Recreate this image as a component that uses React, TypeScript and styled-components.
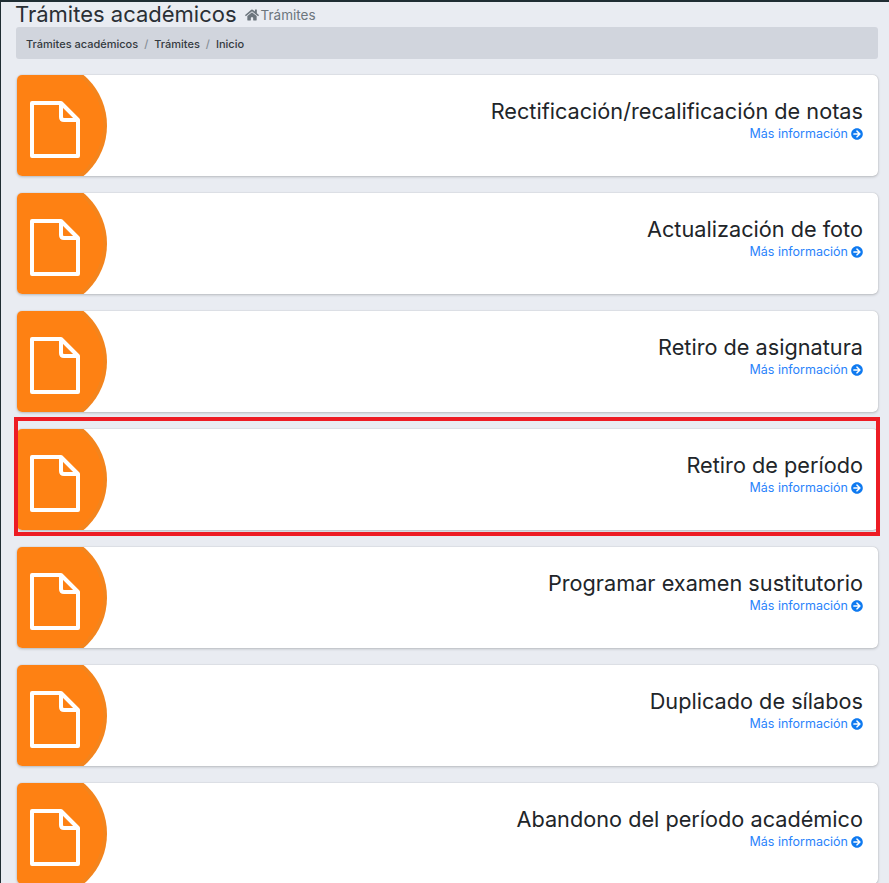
import React from "react";
import styled, { createGlobalStyle } from "styled-components";
import { FaHome, FaArrowCircleRight } from "react-icons/fa";

const Global = createGlobalStyle`
  html, body { margin: 0; padding: 0; height: 883px; overflow: hidden; background: #e9ecf2; }
  * { box-sizing: border-box; }
  body { font-family: Inter, "Noto Sans", "Liberation Sans", sans-serif; color: #212529; }
`;

const Page = styled.div`
  height: 883px;
  overflow: hidden;
  border-top: 2px solid #1f2d33;
  border-left: 1px solid #1f2d33;
  padding: 0 11px 0 15px;
`;

const Header = styled.div`
  display: flex;
  align-items: baseline;
  height: 25px;
  gap: 8px;
  line-height: 22px;
  padding-top: 1px;
`;

const Title = styled.h1`
  margin: 0 0 0 -1px;
  font-size: 22px;
  font-weight: 400;
  color: #2a2f35;
`;

const Sub = styled.span`
  display: inline-flex;
  align-items: center;
  gap: 2px;
  font-size: 13.5px;
  color: #6c757d;
`;

const Crumbs = styled.nav`
  display: flex;
  align-items: center;
  height: 32px;
  padding: 1px 10px 0;
  background: #d1d5dd;
  border-radius: 3px;
  font-size: 11px;
  font-weight: 500;
  color: #343a40;
  margin-bottom: 16px;
`;

const Sep = styled.span`
  color: #868e96;
  margin: 0 6px;
`;

const List = styled.div`
  display: flex;
  flex-direction: column;
  gap: 17px;
  padding-left: 1px;
`;

const Wrap = styled.div`
  position: relative;
`;

const Card = styled.div`
  display: flex;
  height: 101px;
  background: #fff;
  border-radius: 5px;
  overflow: hidden;
  box-shadow: 0 0 1px rgba(0, 0, 0, 0.25), 0 1px 3px rgba(0, 0, 0, 0.2);
`;

const Blob = styled.div`
  flex: 0 0 90px;
  display: flex;
  align-items: center;
  padding: 8px 0 0 13px;
  background: radial-gradient(circle at 24px 50%, #fe8113 0 62px, #f4841c 62px);
  clip-path: circle(66px at 24px 50%);
`;

const Body = styled.div`
  flex: 1;
  display: flex;
  flex-direction: column;
  align-items: flex-end;
  padding: 23px 15px 0 0;
`;

const CardTitle = styled.div`
  font-size: 21.7px;
  line-height: 27px;
  color: #212529;
`;

const More = styled.a`
  display: inline-flex;
  align-items: center;
  gap: 3px;
  font-size: 12.5px;
  line-height: 18px;
  color: #2a83fb;
  svg { color: #0f7af0; }
`;

const Highlight = styled.div`
  position: absolute;
  left: -3px;
  right: -2px;
  top: -12px;
  bottom: -6px;
  border: 4px solid #ed1c24;
  pointer-events: none;
`;

const FileIcon = () => (
  <svg width="50" height="57" viewBox="0 0 50 57" fill="none" stroke="#fff" strokeWidth="4" strokeLinejoin="round">
    <path d="M2 2H31L48 19V55H2Z" />
    <path d="M31 2V16Q31 19 34 19H48" />
  </svg>
);

const items = [
  "Rectificación/recalificación de notas",
  "Actualización de foto",
  "Retiro de asignatura",
  "Retiro de período",
  "Programar examen sustitutorio",
  "Duplicado de sílabos",
  "Abandono del período académico",
];

export default function App() {
  return (
    <>
      <Global />
      <Page>
        <Header>
          <Title>Trámites académicos</Title>
          <Sub><FaHome size={14} />Trámites</Sub>
        </Header>
        <Crumbs>
          Trámites académicos<Sep>/</Sep>Trámites<Sep>/</Sep>Inicio
        </Crumbs>
        <List>
          {items.map((t) => (
            <Wrap key={t}>
              <Card>
                <Blob><FileIcon /></Blob>
                <Body>
                  <CardTitle>{t}</CardTitle>
                  <More>Más información <FaArrowCircleRight size={12} /></More>
                </Body>
              </Card>
              {t === "Retiro de período" && <Highlight />}
            </Wrap>
          ))}
        </List>
      </Page>
    </>
  );
}
